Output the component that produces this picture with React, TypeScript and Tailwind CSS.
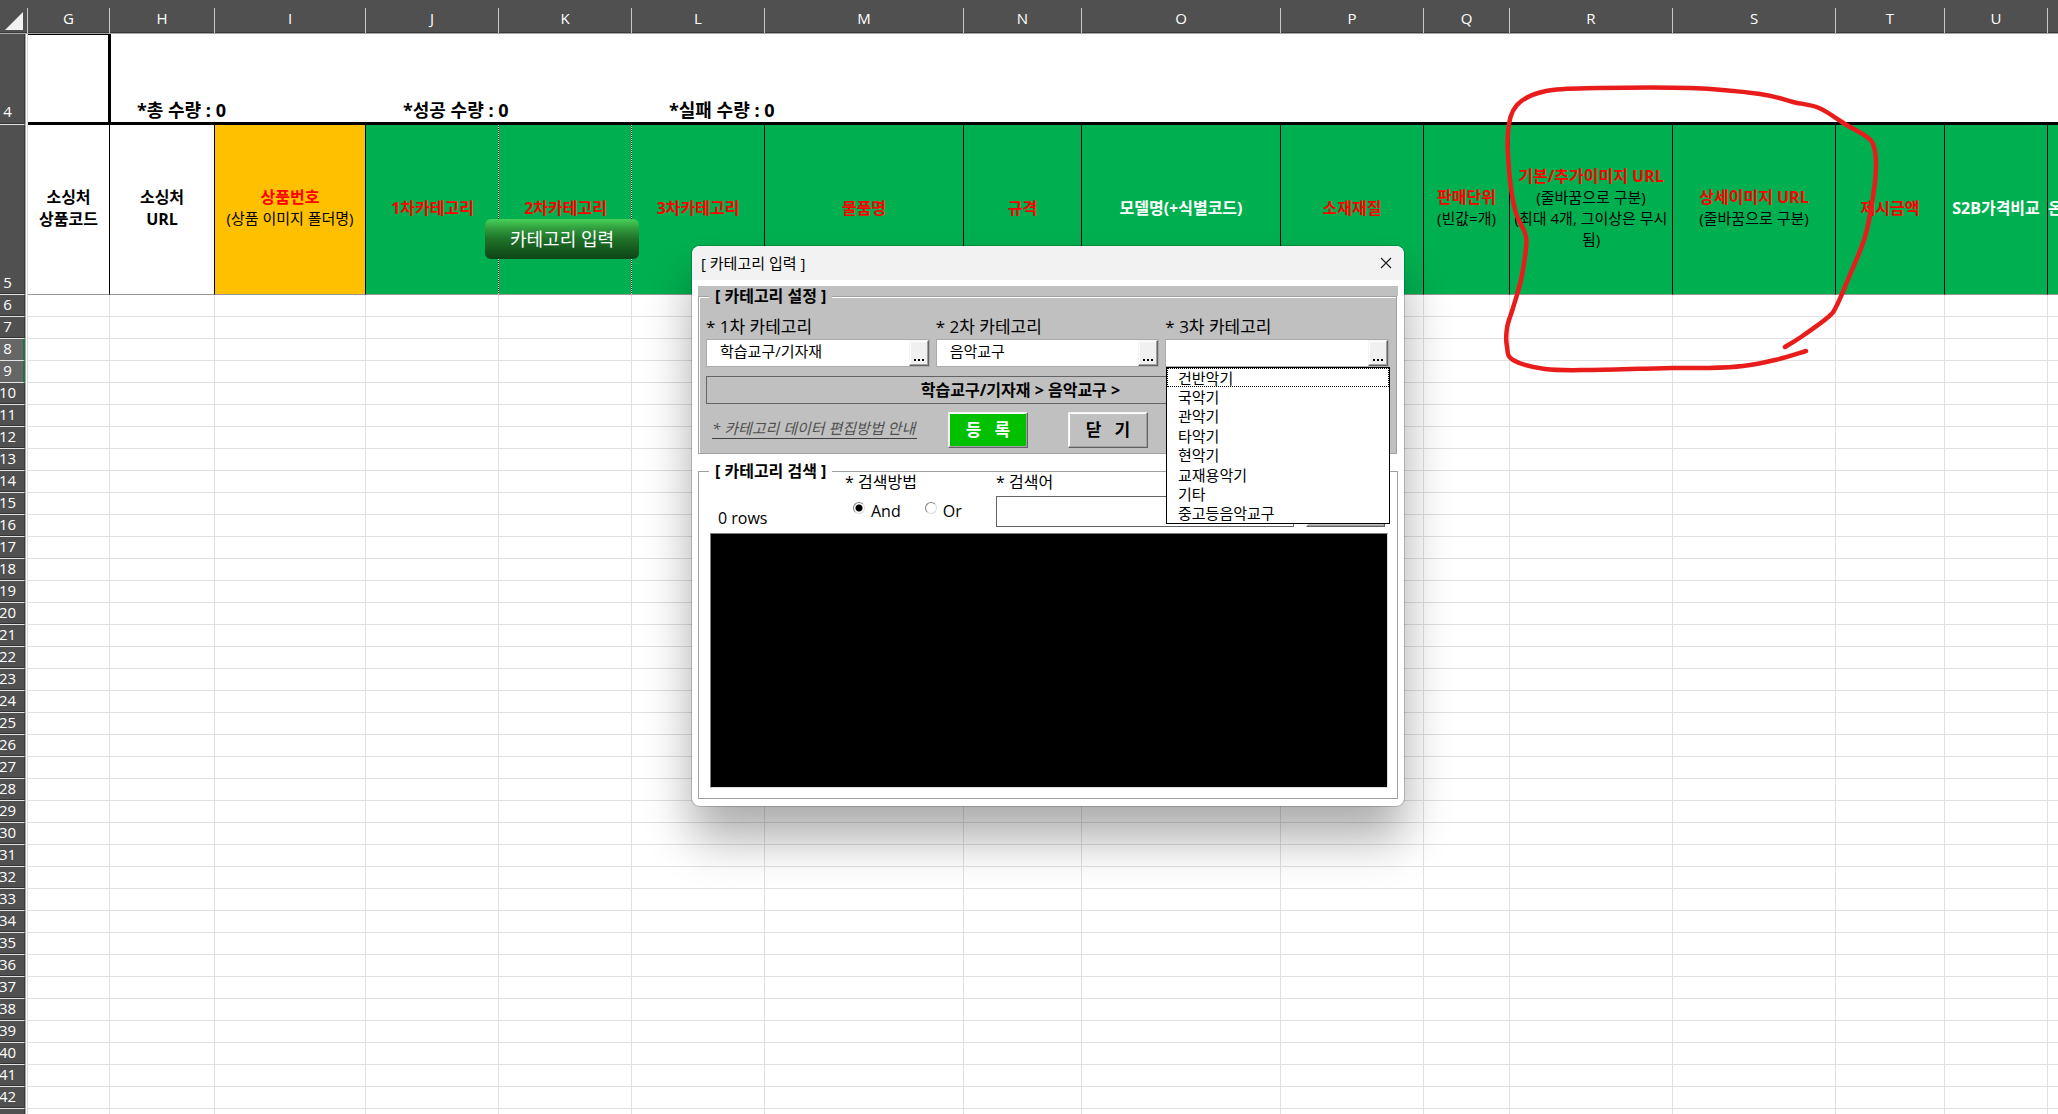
import React, { useState } from "react";

type Tone = "white" | "amber" | "green";

interface Column {
  letter: string;
  width: string;
  tone: Tone;
  title: string[];
  titleColor: string;
  notes?: string[];
  dotted?: boolean;
}

const RED = "text-[#ff0000]";

const columns: Column[] = [
  { letter: "G", width: "w-[82px]", tone: "white", title: ["소싱처", "상품코드"], titleColor: "text-black" },
  { letter: "H", width: "w-[105px]", tone: "white", title: ["소싱처", "URL"], titleColor: "text-black" },
  { letter: "I", width: "w-[151px]", tone: "amber", title: ["상품번호"], titleColor: RED, notes: ["(상품 이미지 폴더명)"] },
  { letter: "J", width: "w-[133px]", tone: "green", title: ["1차카테고리"], titleColor: RED, dotted: true },
  { letter: "K", width: "w-[133px]", tone: "green", title: ["2차카테고리"], titleColor: RED, dotted: true },
  { letter: "L", width: "w-[133px]", tone: "green", title: ["3차카테고리"], titleColor: RED },
  { letter: "M", width: "w-[199px]", tone: "green", title: ["물품명"], titleColor: RED },
  { letter: "N", width: "w-[118px]", tone: "green", title: ["규격"], titleColor: RED },
  { letter: "O", width: "w-[199px]", tone: "green", title: ["모델명(+식별코드)"], titleColor: "text-white" },
  { letter: "P", width: "w-[143px]", tone: "green", title: ["소재재질"], titleColor: RED },
  { letter: "Q", width: "w-[86px]", tone: "green", title: ["판매단위"], titleColor: RED, notes: ["(빈값=개)"] },
  {
    letter: "R",
    width: "w-[163px]",
    tone: "green",
    title: ["기본/추가이미지 URL"],
    titleColor: RED,
    notes: ["(줄바꿈으로 구분)", "(최대 4개, 그이상은 무시", "됨)"],
  },
  { letter: "S", width: "w-[163px]", tone: "green", title: ["상세이미지 URL"], titleColor: RED, notes: ["(줄바꿈으로 구분)"] },
  { letter: "T", width: "w-[109px]", tone: "green", title: ["제시금액"], titleColor: RED },
  { letter: "U", width: "w-[103px]", tone: "green", title: ["S2B가격비교"], titleColor: "text-white" },
  { letter: "", width: "", tone: "green", title: ["온"], titleColor: "text-white" },
];

const toneClass: Record<Tone, string> = {
  white: "bg-white",
  amber: "bg-[#ffc000]",
  green: "bg-[#00b050]",
};

const bodyRows = Array.from({ length: 38 }, (_, i) => i + 6);

const options = ["건반악기", "국악기", "관악기", "타악기", "현악기", "교재용악기", "기타", "중고등음악교구"];

const strokePoints: [number, number][] = [
  [1806, 351], [1775, 360], [1743, 366], [1708, 368], [1672, 368], [1591, 370], [1545, 369], [1513, 360],
  [1507, 347], [1507, 328], [1513, 308], [1521, 280], [1526, 248], [1525, 233], [1516, 213], [1510, 180],
  [1508, 133], [1517, 105], [1546, 91], [1598, 88], [1690, 88], [1760, 94], [1793, 102], [1819, 108],
  [1845, 124], [1867, 137], [1874, 147], [1876, 167], [1873, 197], [1865, 237], [1849, 277], [1836, 307],
  [1827, 318], [1801, 337], [1785, 347],
];

/** Catmull-Rom spline through the given points, as an SVG path. */
function smooth(points: [number, number][]) {
  let d = `M${points[0][0]} ${points[0][1]}`;
  for (let i = 0; i < points.length - 1; i++) {
    const a = points[Math.max(i - 1, 0)];
    const b = points[i];
    const c = points[i + 1];
    const e = points[Math.min(i + 2, points.length - 1)];
    d += ` C${b[0] + (c[0] - a[0]) / 6} ${b[1] + (c[1] - a[1]) / 6} ${c[0] - (e[0] - b[0]) / 6} ${c[1] - (e[1] - b[1]) / 6} ${c[0]} ${c[1]}`;
  }
  return d;
}

function RowNumber({ n, className = "" }: { n: number; className?: string }) {
  const selected = n === 8 || n === 9;
  return (
    <>
      <th
        scope="row"
        className={`overflow-hidden whitespace-nowrap border-b border-b-[#e4e4e4] px-0 pt-0 text-center text-[15px] leading-[18px] font-normal text-white ${
          selected
            ? "border-r-2 border-r-[#217346] bg-[#666666] pr-2"
            : "border-r border-r-[#3a3a3a] bg-[#505050] pr-[9px] shadow-[inset_0_-1px_0_#333]"
        } ${className || "pb-[3px]"}`}
      >
        <span className="-mx-2">{n}</span>
      </th>
      <td className="border-r border-l border-r-[#d9d9d9] border-l-[#a6a6a6] bg-white p-0" />
    </>
  );
}

function Sheet() {
  return (
    <table className="w-full min-w-[2058px] table-fixed border-separate border-spacing-0">
      <colgroup>
        <col className="w-[25px]" />
        <col className="w-[3px]" />
        {columns.map((c, i) => (
          <col key={i} className={c.width} />
        ))}
      </colgroup>
      <thead>
        <tr className="h-[34px] bg-[#505050] text-white">
          <th colSpan={2} className="border-b border-[#a6a6a6] p-0 pt-2 shadow-[inset_0_-1px_0_#3a3a3a]">
            <div className="flex h-[25px] items-center justify-center border-r border-[#c8c8c8]">
              <svg width="18" height="18" viewBox="0 0 18 18" aria-hidden="true">
                <path d="M18 0V18H0Z" fill="#f2f2f2" />
              </svg>
            </div>
          </th>
          {columns.map((c, i) => (
            <th
              key={i}
              scope="col"
              className="border-b border-[#a6a6a6] p-0 pt-2 text-[15px] font-normal shadow-[inset_0_-1px_0_#3a3a3a]"
            >
              <div className={`h-[25px] leading-5 ${c.letter ? "border-r border-[#c8c8c8]" : ""}`}>{c.letter}</div>
            </th>
          ))}
        </tr>
      </thead>
      <tbody>
        <tr className="h-[91px] align-bottom text-[18px] leading-6 font-bold">
          <RowNumber n={4} className="pb-1" />
          <td className="border-t border-r-2 border-b-3 border-black p-0" />
          <td colSpan={2} className="border-b-3 border-l border-black p-0 pl-[26px]">
            *총 수량 : 0
          </td>
          <td colSpan={2} className="border-b-3 border-black p-0 pl-[37px]">
            *성공 수량 : 0
          </td>
          <td colSpan={11} className="border-b-3 border-black p-0 pl-[37px]">
            *실패 수량 : 0
          </td>
        </tr>
        <tr className="h-[170px]">
          <RowNumber n={5} className="pb-[3px] align-bottom" />
          {columns.map((c, i) => (
            <td
              key={i}
              className={`overflow-hidden border-b border-b-[#969696] px-0 pt-0 pb-1 text-center align-middle whitespace-nowrap ${toneClass[c.tone]} ${
                c.dotted
                  ? "bg-[repeating-linear-gradient(180deg,#fff_0px,#fff_1px,#000_1px,#000_2px)] bg-[length:1px_100%] bg-right bg-no-repeat"
                  : c.letter
                    ? "border-r border-r-black"
                    : ""
              }`}
            >
              <div className={`text-[16px] leading-[22px] font-bold ${c.titleColor}`}>
                {c.title.map((t) => (
                  <div key={t}>{t}</div>
                ))}
              </div>
              {c.notes && (
                <div className="text-[15px] leading-[21px] text-black">
                  {c.notes.map((t) => (
                    <div key={t}>{t}</div>
                  ))}
                </div>
              )}
            </td>
          ))}
        </tr>
        {bodyRows.map((n) => (
          <tr key={n} className="h-[22px]">
            <RowNumber n={n} />
            {columns.map((c, i) => (
              <td key={i} className={`border-b border-[#e0e0e0] p-0 ${c.letter ? "border-r" : ""}`} />
            ))}
          </tr>
        ))}
      </tbody>
    </table>
  );
}

const raised = "border border-t-[#f4f4f4] border-l-[#f4f4f4] border-r-[#646464] border-b-[#646464] shadow-[inset_-1px_-1px_0_#a0a0a0,inset_1px_1px_0_#fff]";

function CategoryField({ level, value }: { level: number; value: string }) {
  const [text, setText] = useState(value);
  const id = `category-${level}`;
  return (
    <div className="min-w-0 flex-1">
      <label htmlFor={id} className="block text-[17px] leading-6">
        * {level}차 카테고리
      </label>
      <div className="flex h-7 border border-[#ababab] bg-white">
        <input
          id={id}
          value={text}
          onChange={(e) => setText(e.target.value)}
          className="min-w-0 flex-1 pb-1 pl-[13px] text-[15px] leading-5 outline-none"
        />
        <button
          type="button"
          aria-label={`${level}차 카테고리 열기`}
          className={`flex w-5 items-end justify-center gap-[2px] bg-[#f0f0f0] pb-1 ${raised}`}
        >
          <span className="size-[2px] bg-black" />
          <span className="size-[2px] bg-black" />
          <span className="size-[2px] bg-black" />
        </button>
      </div>
    </div>
  );
}

const radioClass =
  "size-3 appearance-none rounded-full border border-t-[#808080] border-l-[#808080] border-r-[#dcdcdc] border-b-[#dcdcdc] bg-white checked:bg-[radial-gradient(circle,#000_0px,#000_3px,transparent_4px)]";

function Dialog() {
  const [mode, setMode] = useState("And");
  return (
    <section
      role="dialog"
      aria-labelledby="dialog-title"
      className="absolute top-[246px] left-[692px] flex h-[560px] w-[712px] flex-col rounded-lg bg-white shadow-[0_0_0_1px_rgba(0,0,0,0.18),0_32px_48px_rgba(0,0,0,0.33)]"
    >
      <header className="flex h-[34px] shrink-0 items-center justify-between rounded-t-lg bg-[#f2f2f2] pr-3 pl-[9px]">
        <h1 id="dialog-title" className="text-[15px] leading-5">
          [ 카테고리 입력 ]
        </h1>
        <button type="button" aria-label="닫기" className="flex size-3 items-center justify-center">
          <svg width="12" height="12" viewBox="0 0 12 12" fill="none" stroke="#1a1a1a" strokeWidth="1.1">
            <path d="M1 1L11 11M11 1L1 11" />
          </svg>
        </button>
      </header>

      <div className="mx-[6px] mt-[6px] shrink-0 bg-[#c0c0c0]">
        <fieldset className="mr-px min-w-0 border border-[#a0a0a0] px-[7px] pb-[5px] shadow-[inset_1px_1px_0_#fff,1px_0_0_#fff]">
          <legend className="ml-[3px] bg-[#c0c0c0] px-[6px] text-[16px] leading-5 font-bold">[ 카테고리 설정 ]</legend>
          <div className="mt-[9px] flex gap-[6px]">
            <CategoryField level={1} value="학습교구/기자재" />
            <CategoryField level={2} value="음악교구" />
            <CategoryField level={3} value="" />
          </div>
          <div className="mt-[9px] mr-[54px] border border-[#646464] text-center text-[16px] leading-[26px] font-bold">
            학습교구/기자재 &gt; 음악교구 &gt;
          </div>
          <div className="mt-2 flex items-center">
            <a
              href="#guide"
              className="mb-1 ml-[6px] w-[205px] border-b border-[#404040] text-[15px] leading-5 whitespace-nowrap text-[#505050] italic"
            >
              * 카테고리 데이터 편집방법 안내
            </a>
            <button
              type="button"
              className={`ml-[31px] h-9 w-20 bg-[#00c000] text-[17px] leading-6 font-bold whitespace-pre text-white ${raised}`}
            >
              {"등   록"}
            </button>
            <button
              type="button"
              className={`ml-10 h-9 w-20 bg-[#c0c0c0] text-[17px] leading-6 font-bold whitespace-pre ${raised}`}
            >
              {"닫   기"}
            </button>
          </div>
        </fieldset>
      </div>

      <fieldset className="mx-[6px] mt-[7px] mb-[7px] flex min-h-0 min-w-0 flex-1 flex-col border border-[#a0a0a0] pr-[9px] pb-[10px] pl-[11px]">
        <legend className="-ml-px bg-white px-[6px] text-[16px] leading-5 font-bold">[ 카테고리 검색 ]</legend>
        <div className="-mt-[11px] flex h-[60px] shrink-0">
          <div className="w-[135px] self-end pl-2 text-[16px] leading-6">0 rows</div>
          <div className="w-[151px]" role="radiogroup" aria-labelledby="mode-label">
            <div id="mode-label" className="text-[16px] leading-6">
              * 검색방법
            </div>
            <div className="mt-[5px] flex gap-6 pl-2 text-[16px] leading-6">
              {["And", "Or"].map((m) => (
                <label key={m} className="flex items-start gap-[6px]">
                  <input
                    type="radio"
                    name="mode"
                    checked={mode === m}
                    onChange={() => setMode(m)}
                    className={`mt-[3px] ${radioClass}`}
                  />
                  {m}
                </label>
              ))}
            </div>
          </div>
          <div className="w-[298px]">
            <label htmlFor="keyword" className="block text-[16px] leading-6">
              * 검색어
            </label>
            <input id="keyword" className="mt-[2px] block h-[31px] w-full border border-[#646464] bg-white px-2 outline-none" />
          </div>
          <button type="button" aria-label="검색" className={`mt-[26px] ml-3 h-[31px] w-[79px] bg-[#c0c0c0] ${raised}`} />
        </div>
        <div
          role="listbox"
          aria-label="검색 결과"
          className="mt-[3px] min-h-0 flex-1 border border-t-[#808080] border-r-[#dcdcdc] border-b-[#dcdcdc] border-l-[#808080] bg-black"
        />
      </fieldset>

      <ul
        role="listbox"
        aria-label="3차 카테고리"
        className="absolute top-[121px] right-[14px] flex h-[157px] w-[224px] flex-col border border-black bg-white text-[15px] leading-4"
      >
        {options.map((o, i) => (
          <li
            key={o}
            role="option"
            aria-selected={i === 0}
            className={`flex flex-1 items-center border pl-[10px] ${i === 0 ? "border-dotted border-black" : "border-transparent"}`}
          >
            {o}
          </li>
        ))}
      </ul>
    </section>
  );
}

export default function App() {
  return (
    <main className="relative h-screen overflow-hidden bg-white font-['Open_Sans','Noto_Sans_CJK_KR',sans-serif] text-black">
      <Sheet />
      <button
        type="button"
        className="absolute top-[219px] left-[485px] h-10 w-[154px] rounded-md bg-[linear-gradient(180deg,#48d058_0%,#2f9a3c_25%,#1f7229_50%,#165a1f_75%,#0f4517_100%)] text-[18px] leading-6 text-white"
      >
        카테고리 입력
      </button>
      <Dialog />
      <svg
        className="pointer-events-none absolute top-0 left-0"
        width="2058"
        height="400"
        viewBox="0 0 2058 400"
        fill="none"
        aria-hidden="true"
      >
        <path d={smooth(strokePoints)} stroke="#e91c1c" strokeWidth="4.5" strokeLinecap="round" strokeLinejoin="round" />
      </svg>
    </main>
  );
}
